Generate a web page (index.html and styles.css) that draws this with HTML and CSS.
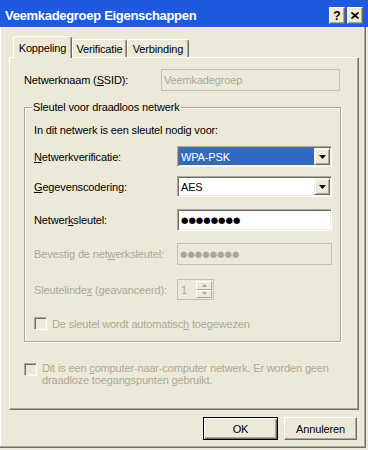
FILE: index.html
```html
<!DOCTYPE html>
<html lang="nl">
<head>
    <meta charset="utf-8">
    <title>Veemkadegroep Eigenschappen</title>
    <link rel="stylesheet" href="styles.css">
</head>
<body>
<div class="window">
    <div class="titlebar">
        <span class="title">Veemkadegroep Eigenschappen</span>
        <span class="caption-btn">?</span>
        <span class="caption-btn">
            <svg width="8" height="7" viewBox="0 0 8 7"><path d="M0.5 0.5 L7.5 6.5 M7.5 0.5 L0.5 6.5" stroke="#000" stroke-width="1.8" fill="none"/></svg>
        </span>
    </div>

    <div class="frame">
        <div class="tabs">
            <div class="tab active tab-koppeling">Koppeling</div>
            <div class="tab tab-verificatie">Verificatie</div>
            <div class="tab tab-verbinding">Verbinding</div>
        </div>

        <div class="panel">
            <div class="row row-top">
                <label class="lbl">Netwerknaam (<u>S</u>SID):</label>
                <div class="edit off ssid">Veemkadegroep</div>
            </div>

            <fieldset class="group">
                <legend>Sleutel voor draadloos netwerk</legend>
                <div class="intro">In dit netwerk is een sleutel nodig voor:</div>

                <div class="row r-auth">
                    <label class="lbl"><u>N</u>etwerkverificatie:</label>
                    <div class="combo">
                        <span class="combo-val selected">WPA-PSK</span>
                        <span class="drop"><svg width="7" height="4" viewBox="0 0 7 4"><polygon points="0,0 7,0 3.5,4" fill="#000"/></svg></span>
                    </div>
                </div>

                <div class="row r-enc">
                    <label class="lbl"><u>G</u>egevenscodering:</label>
                    <div class="combo">
                        <span class="combo-val">AES</span>
                        <span class="drop"><svg width="7" height="4" viewBox="0 0 7 4"><polygon points="0,0 7,0 3.5,4" fill="#000"/></svg></span>
                    </div>
                </div>

                <div class="row r-key">
                    <label class="lbl">Netwer<u>k</u>sleutel:</label>
                    <div class="edit wide dots">●●●●●●●●</div>
                </div>

                <div class="row r-confirm off-text">
                    <label class="lbl">Bevestig de net<u>w</u>erksleutel:</label>
                    <div class="edit off wide dots">●●●●●●●●</div>
                </div>

                <div class="row r-index off-text">
                    <label class="lbl">Sleutelinde<u>x</u> (geavanceerd):</label>
                    <div class="spin">
                        <span class="spin-val">1</span>
                        <span class="spin-btns">
                            <span class="spin-btn"><svg width="5" height="3" viewBox="0 0 5 3"><polygon points="2.5,0 5,3 0,3" fill="#aca899"/></svg></span>
                            <span class="spin-btn"><svg width="5" height="3" viewBox="0 0 5 3"><polygon points="0,0 5,0 2.5,3" fill="#aca899"/></svg></span>
                        </span>
                    </div>
                </div>

                <div class="check-row r-auto off-text">
                    <span class="checkbox"></span>
                    <span>De sleutel wordt automatisc<u>h</u> toegewezen</span>
                </div>
            </fieldset>

            <div class="check-row adhoc off-text">
                <span class="checkbox"></span>
                <span>Dit is een <u>c</u>omputer-naar-computer netwerk. Er worden geen<br>draadloze toegangspunten gebruikt.</span>
            </div>
        </div>

        <div class="buttons">
            <button class="btn default">OK</button>
            <button class="btn cancel">Annuleren</button>
        </div>
    </div>
</div>
</body>
</html>
```

FILE: styles.css
```css
body {
    margin: 0;
    background: #ece9d8;
    font-family: "Liberation Sans", Arial, sans-serif;
    font-size: 11px;
    letter-spacing: -0.15px;
    color: #000;
}

.window {
    width: 368px;
    height: 450px;
    overflow: hidden;
}

/* title bar */
.titlebar {
    height: 27px;
    box-sizing: border-box;
    padding: 4px 5px 0 5px;
    display: flex;
    align-items: center;
    background: #1e5ade;
    color: #fff;
}
.title {
    flex: 1;
    font-size: 13px;
    font-weight: bold;
    letter-spacing: -0.3px;
}
.caption-btn {
    width: 16px;
    height: 17px;
    box-sizing: border-box;
    margin-left: 2px;
    display: flex;
    align-items: center;
    justify-content: center;
    background: #ece9d8;
    color: #000;
    border: 1px solid;
    border-color: #fff #716f64 #716f64 #fff;
    box-shadow: inset -1px -1px #aca899;
    font-size: 12px;
    font-weight: bold;
    letter-spacing: 0;
}

.frame {
    width: 366px;
    height: 421px;
    box-sizing: border-box;
    border-right: 1px solid #716f64;
    border-bottom: 1px solid #716f64;
    box-shadow: inset -1px -1px #aca899, inset 1px 0 #fff;
    padding: 9px 0 0 9px;
}

/* tabs */
.tabs {
    display: flex;
    align-items: flex-end;
    height: 21px;
    padding-left: 4px;
}
.tab {
    height: 18px;
    box-sizing: border-box;
    border: 1px solid;
    border-bottom: none;
    border-color: #fff #716f64 #fff #fff;
    border-radius: 3px 3px 0 0;
    box-shadow: inset -1px 0 #aca899;
    display: flex;
    align-items: center;
    justify-content: center;
    background: #ece9d8;
}
.tab.active {
    height: 22px;
    margin-bottom: -1px;
    position: relative;
    z-index: 1;
}
.tab-koppeling { width: 59px; }
.tab-verificatie { width: 55px; }
.tab-verbinding { width: 62px; }

.panel {
    width: 350px;
    height: 353px;
    box-sizing: border-box;
    border: 1px solid;
    border-color: #fff #716f64 #716f64 #fff;
    box-shadow: inset -1px -1px #aca899;
    padding: 11px 0 0 14px;
}

/* rows */
.row {
    display: flex;
    align-items: center;
}
.row-top { height: 22px; }
.row-top .lbl { width: 137px; }

.edit {
    box-sizing: border-box;
    height: 22px;
    padding: 0 3px;
    display: flex;
    align-items: center;
    background: #fff;
    border: 1px solid;
    border-color: #aca899 #fff #fff #aca899;
    box-shadow: inset 1px 1px #716f64, inset -1px -1px #f1efe2;
}
.edit.off {
    background: #ece9d8;
    border-color: #c4c1b3;
    box-shadow: none;
    color: #aca899;
    padding-left: 2px;
}
.ssid { width: 179px; }
.wide { width: 155px; }
.dots {
    font-family: "DejaVu Sans", sans-serif;
    font-size: 8.5px;
    letter-spacing: 0;
}

/* group box */
.group {
    width: 317px;
    box-sizing: border-box;
    margin: 10px 0 0 0;
    padding: 10px 8px 11px 9px;
    border: 1px solid #aca899;
    box-shadow: 1px 1px #fff, inset 1px 1px #fff;
}
.group legend {
    padding: 0 1px;
    margin-left: -2px;
    line-height: 13px;
    background: #ece9d8;
}
.intro { line-height: 13px; }
.group .lbl { width: 143px; }

.r-auth { margin-top: 9px; }
.r-enc { margin-top: 9px; }
.r-key { margin-top: 12px; }
.r-confirm { margin-top: 12px; }
.r-index { margin-top: 14px; }
.r-auto { margin-top: 17px; }

.off-text { color: #aca899; }

.combo {
    width: 155px;
    height: 21px;
    box-sizing: border-box;
    padding: 1px;
    display: flex;
    background: #fff;
    border: 1px solid;
    border-color: #aca899 #fff #fff #aca899;
    box-shadow: inset 1px 1px #716f64, inset -1px -1px #f1efe2;
}
.combo-val {
    flex: 1;
    padding-left: 2px;
    display: flex;
    align-items: center;
}
.combo-val.selected {
    background: #316ac5;
    color: #fff;
}
.drop {
    width: 16px;
    box-sizing: border-box;
    display: flex;
    align-items: center;
    justify-content: center;
    background: #ece9d8;
    border: 1px solid;
    border-color: #f1efe2 #716f64 #716f64 #f1efe2;
    box-shadow: inset 1px 1px #fff, inset -1px -1px #aca899;
}

.spin {
    width: 37px;
    height: 21px;
    box-sizing: border-box;
    border: 1px solid #c4c1b3;
    display: flex;
}
.spin-val {
    flex: 1;
    padding-left: 3px;
    display: flex;
    align-items: center;
}
.spin-btns {
    width: 16px;
    padding: 1px 1px 1px 0;
    display: flex;
    flex-direction: column;
}
.spin-btn {
    flex: 1;
    display: flex;
    align-items: center;
    justify-content: center;
    border: 1px solid;
    border-color: #fff #aca899 #aca899 #fff;
}

/* checkboxes */
.check-row {
    display: flex;
    align-items: center;
    gap: 5px;
}
.checkbox {
    width: 13px;
    height: 13px;
    box-sizing: border-box;
    flex: none;
    border: 1px solid;
    border-color: #aca899 #fff #fff #aca899;
    box-shadow: inset 1px 1px #716f64, inset -1px -1px #f1efe2;
}
.adhoc {
    margin-top: 20px;
    align-items: flex-start;
    line-height: 12px;
}
.adhoc .checkbox { margin-top: 1px; }

/* dialog buttons */
.buttons {
    display: flex;
    justify-content: flex-end;
    gap: 6px;
    margin-top: 7px;
    padding-right: 8px;
}
.btn {
    width: 75px;
    height: 23px;
    padding: 0;
    font: inherit;
    letter-spacing: inherit;
    color: #000;
    background: #ece9d8;
    border: 1px solid;
    border-color: #fff #716f64 #716f64 #fff;
    box-shadow: inset -1px -1px #aca899;
}
.btn.default {
    border-color: #000;
    box-shadow: inset 1px 1px #fff, inset -1px -1px #716f64, inset -2px -2px #aca899;
}
.btn.cancel { width: 73px; }
```
